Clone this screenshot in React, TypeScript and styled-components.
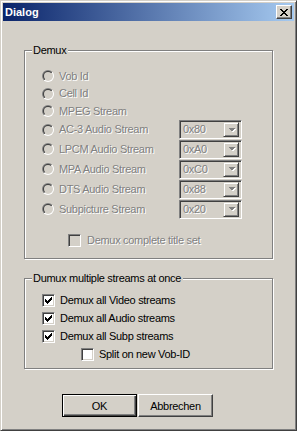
import React from 'react';
import styled, { createGlobalStyle } from 'styled-components';

const Global = createGlobalStyle`
  html, body { margin: 0; padding: 0; background: #D4D0C8; }
  body {
    font-family: "Liberation Sans", Arial, sans-serif;
    font-size: 11px;
    color: #000;
  }
  * { box-sizing: border-box; }
`;

const Win = styled.div`
  width: 297px;
  height: 431px;
  background: #d4d0c8;
  border: 1px solid;
  border-color: #d4d0c8 #404040 #404040 #d4d0c8;
  box-shadow: inset 1px 1px #fff, inset -1px -1px #808080;
  padding: 2px;
  display: flex;
  flex-direction: column;
`;

const TitleBar = styled.div`
  height: 18px;
  flex: none;
  display: flex;
  align-items: center;
  justify-content: space-between;
  background: linear-gradient(to right, #0a246a, #a6caf0);
  padding: 0 2px 0 2px;
`;

const Title = styled.span`
  color: #fff;
  font-weight: bold;
  font-size: 11px;
  line-height: 18px;
`;

const CloseBtn = styled.div`
  width: 16px;
  height: 14px;
  background: #d4d0c8;
  border: 1px solid;
  border-color: #fff #404040 #404040 #fff;
  box-shadow: inset -1px -1px #808080;
  display: flex;
  align-items: center;
  justify-content: center;
`;

const Body = styled.div`
  display: flex;
  flex-direction: column;
  padding: 29px 21px 0 21px;
`;

const Group = styled.div<{ $mt?: number }>`
  border: 1px solid #808080;
  box-shadow: inset 1px 1px #fff, 1px 1px #fff;
  display: flex;
  flex-direction: column;
  margin-top: ${p => p.$mt ?? 0}px;
`;

const GroupLabel = styled.div`
  align-self: flex-start;
  margin: -7px 0 0 7px;
  padding: 0 2px 0 1px;
  background: #d4d0c8;
  line-height: 13px;
  height: 13px;
  letter-spacing: -0.3px;
  white-space: nowrap;
`;

const List = styled.div<{ $mt: number; $mb: number; $pl: number }>`
  display: flex;
  flex-direction: column;
  margin: ${p => p.$mt}px 0 ${p => p.$mb}px 0;
  padding-left: ${p => p.$pl}px;
`;

const Row = styled.div<{ $h: number }>`
  height: ${p => p.$h}px;
  display: grid;
  grid-template-columns: 137px 63px;
  align-items: center;
`;

const Option = styled.div<{ $gap?: number; $indent?: number }>`
  display: flex;
  align-items: center;
  gap: ${p => p.$gap ?? 5}px;
  padding-left: ${p => p.$indent ?? 0}px;
  white-space: nowrap;
`;

const Label = styled.span<{ $disabled?: boolean }>`
  line-height: 13px;
  letter-spacing: -0.3px;
  color: ${p => (p.$disabled ? '#808080' : '#000')};
  text-shadow: ${p => (p.$disabled ? '1px 1px #fff' : 'none')};
`;

const Combo = styled.div`
  width: 63px;
  height: 19px;
  border: 1px solid;
  border-color: #808080 #fff #fff #808080;
  box-shadow: inset 1px 1px #404040, inset -1px -1px #d4d0c8;
  background: #d4d0c8;
  display: flex;
  align-items: center;
  justify-content: space-between;
  padding: 2px;
`;

const ComboText = styled.span`
  padding-left: 1px;
  color: #808080;
  text-shadow: 1px 1px #fff;
  letter-spacing: -0.3px;
  line-height: 13px;
`;

const ArrowBtn = styled.div`
  width: 16px;
  height: 15px;
  border: 1px solid;
  border-color: #d4d0c8 #404040 #404040 #d4d0c8;
  box-shadow: inset 1px 1px #fff, inset -1px -1px #808080;
  display: flex;
  align-items: center;
  justify-content: center;
`;

const CheckBox = styled.div<{ $disabled?: boolean }>`
  width: 13px;
  height: 13px;
  flex: none;
  border: 1px solid;
  border-color: #808080 #fff #fff #808080;
  box-shadow: inset 1px 1px #404040, inset -1px -1px #d4d0c8;
  background: ${p => (p.$disabled ? '#d4d0c8' : '#fff')};
  position: relative;
`;

const Buttons = styled.div`
  display: flex;
  gap: 1px;
  margin-top: 25px;
  padding-left: 38px;
`;

const Button = styled.div<{ $default?: boolean }>`
  width: 75px;
  height: 23px;
  display: flex;
  align-items: center;
  justify-content: center;
  background: #d4d0c8;
  border: 1px solid;
  border-color: ${p => (p.$default ? '#000' : '#fff #404040 #404040 #fff')};
  box-shadow: ${p =>
    p.$default
      ? 'inset 1px 1px #fff, inset -1px -1px #404040, inset -2px -2px #808080'
      : 'inset -1px -1px #808080'};
  letter-spacing: -0.3px;
`;

const Radio = () => (
  <svg width="12" height="12" viewBox="0 0 12 12" style={{ flex: 'none' }}>
    <defs>
      <linearGradient id="ro" x1="0" y1="0" x2="1" y2="1">
        <stop offset="0.5" stopColor="#808080" />
        <stop offset="0.5" stopColor="#ffffff" />
      </linearGradient>
      <linearGradient id="ri" x1="0" y1="0" x2="1" y2="1">
        <stop offset="0.5" stopColor="#404040" />
        <stop offset="0.5" stopColor="#d4d0c8" />
      </linearGradient>
    </defs>
    <circle cx="6" cy="6" r="6" fill="url(#ro)" />
    <circle cx="6" cy="6" r="5" fill="url(#ri)" />
    <circle cx="6" cy="6" r="4" fill="#d4d0c8" />
  </svg>
);

const checkRows: [number, number, number][] = [
  [6, 0, 1],
  [5, 1, 2],
  [0, 2, 1],
  [4, 2, 3],
  [0, 3, 2],
  [3, 3, 3],
  [0, 4, 5],
  [1, 5, 3],
  [2, 6, 1],
];

const CheckMark = () => (
  <svg width="7" height="7" viewBox="0 0 7 7" style={{ position: 'absolute', left: 2, top: 2 }} shapeRendering="crispEdges">
    {checkRows.map(([x, y, w], i) => (
      <rect key={i} x={x} y={y} width={w} height={1} fill="#000" />
    ))}
  </svg>
);

const Check = ({ checked, disabled }: { checked?: boolean; disabled?: boolean }) => (
  <CheckBox $disabled={disabled}>{checked && <CheckMark />}</CheckBox>
);

const Arrow = () => (
  <svg width="7" height="4" viewBox="0 0 7 4" shapeRendering="crispEdges" style={{ overflow: 'visible' }}>
    <polygon points="1,1 8,1 4.5,4.5" fill="#fff" />
    <polygon points="0,0 7,0 3.5,3.5" fill="#808080" />
  </svg>
);

const CloseX = () => (
  <svg width="8" height="7" viewBox="0 0 8 7" shapeRendering="crispEdges">
    {[
      [0, 0], [1, 1], [2, 2], [3, 3], [2, 4], [1, 5], [0, 6],
    ].map(([x, y], i) => (
      <rect key={'a' + i} x={x} y={y} width={2} height={1} fill="#000" />
    ))}
    {[
      [6, 0], [5, 1], [4, 2], [4, 4], [5, 5], [6, 6],
    ].map(([x, y], i) => (
      <rect key={'b' + i} x={x} y={y} width={2} height={1} fill="#000" />
    ))}
  </svg>
);

const streams: { label: string; h: number; combo?: string }[] = [
  { label: 'Vob Id', h: 18 },
  { label: 'Cell Id', h: 17 },
  { label: 'MPEG Stream', h: 18 },
  { label: 'AC-3 Audio Stream', h: 19, combo: '0x80' },
  { label: 'LPCM Audio Stream', h: 20, combo: '0xA0' },
  { label: 'MPA Audio Stream', h: 20, combo: '0xC0' },
  { label: 'DTS Audio Stream', h: 20, combo: '0x88' },
  { label: 'Subpicture Stream', h: 20, combo: '0x20' },
];

export default function App() {
  return (
    <>
      <Global />
      <Win>
        <TitleBar>
          <Title>Dialog</Title>
          <CloseBtn>
            <CloseX />
          </CloseBtn>
        </TitleBar>
        <Body>
          <Group>
            <GroupLabel>Demux</GroupLabel>
            <List $mt={10} $mb={0} $pl={17}>
              {streams.map(s => (
                <Row key={s.label} $h={s.h}>
                  <Option>
                    <Radio />
                    <Label $disabled>{s.label}</Label>
                  </Option>
                  {s.combo && (
                    <Combo>
                      <ComboText>{s.combo}</ComboText>
                      <ArrowBtn>
                        <Arrow />
                      </ArrowBtn>
                    </Combo>
                  )}
                </Row>
              ))}
            </List>
            <List $mt={15} $mb={11} $pl={43}>
              <Option $gap={6}>
                <Check disabled />
                <Label $disabled>Demux complete title set</Label>
              </Option>
            </List>
          </Group>
          <Group $mt={19}>
            <GroupLabel>Dumux multiple streams at once</GroupLabel>
            <List $mt={6} $mb={5} $pl={17}>
              <Row $h={18}>
                <Option $gap={5}>
                  <Check checked />
                  <Label>Demux all Video streams</Label>
                </Option>
              </Row>
              <Row $h={18}>
                <Option $gap={5}>
                  <Check checked />
                  <Label>Demux all Audio streams</Label>
                </Option>
              </Row>
              <Row $h={18}>
                <Option $gap={5}>
                  <Check checked />
                  <Label>Demux all Subp streams</Label>
                </Option>
              </Row>
              <Row $h={18}>
                <Option $gap={5} $indent={39}>
                  <Check />
                  <Label>Split on new Vob-ID</Label>
                </Option>
              </Row>
            </List>
          </Group>
          <Buttons>
            <Button $default>OK</Button>
            <Button>Abbrechen</Button>
          </Buttons>
        </Body>
      </Win>
    </>
  );
}
